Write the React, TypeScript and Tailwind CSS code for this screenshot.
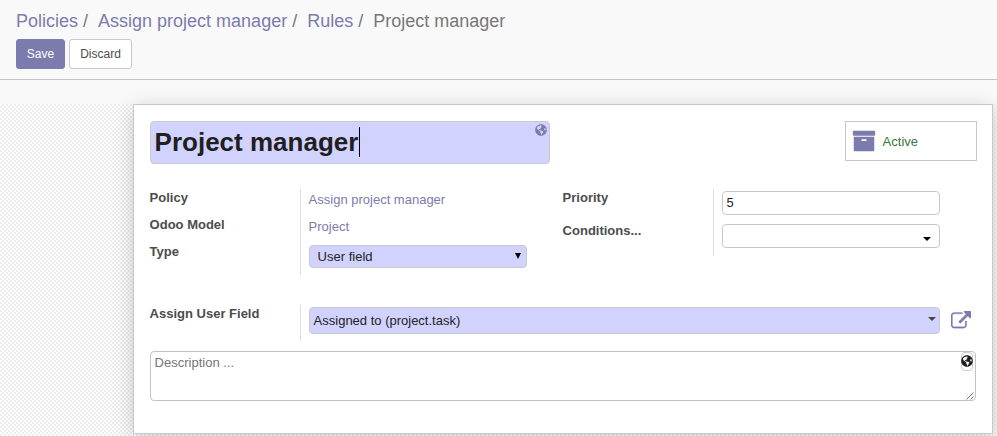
import { FaGlobeAmericas } from "react-icons/fa";

const crumbs = ["Policies", "Assign project manager", "Rules"];

function ArchiveIcon() {
  return (
    <svg viewBox="0 0 1792 1792" className="h-6 w-6 fill-[#7c7bad]">
      <path d="M1088 832q0-26-19-45t-45-19h-256q-26 0-45 19t-19 45 19 45 45 19h256q26 0 45-19t19-45zm576-192v960q0 26-19 45t-45 19h-1408q-26 0-45-19t-19-45v-960q0-26 19-45t45-19h1408q26 0 45 19t19 45zm64-448v256q0 26-19 45t-45 19h-1536q-26 0-45-19t-19-45v-256q0-26 19-45t45-19h1536q26 0 45 19t19 45z" />
    </svg>
  );
}

function ExternalLinkIcon() {
  return (
    <svg viewBox="0 0 1792 1792" className="h-5 w-5 fill-[#7c7bad] stroke-[#7c7bad]" strokeWidth="28">
      <path d="M1408 928v320q0 119-84.5 203.5t-203.5 84.5h-832q-119 0-203.5-84.5t-84.5-203.5v-832q0-119 84.5-203.5t203.5-84.5h704q14 0 23 9t9 23v64q0 14-9 23t-23 9h-704q-66 0-113 47t-47 113v832q0 66 47 113t113 47h832q66 0 113-47t47-113v-320q0-14 9-23t23-9h64q14 0 23 9t9 23zm384-864v512q0 26-19 45t-45 19-45-19l-176-176-652 652q-10 10-23 10t-23-10l-114-114q-10-10-10-23t10-23l652-652-176-176q-19-19-19-45t19-45 45-19h512q26 0 45 19t19 45z" />
    </svg>
  );
}

function Caret({ className }: { className: string }) {
  return (
    <svg viewBox="0 0 8 4" className={`h-1 w-2 ${className}`}>
      <path d="M0 0h8L4 4z" />
    </svg>
  );
}

export default function App() {
  return (
    <div className="flex h-[436px] w-[997px] flex-col overflow-hidden bg-[#f9f9f9] font-['Liberation_Sans',Arial,sans-serif] text-[13px] leading-5 text-[#4c4c4c]">
      <header className="h-20 shrink-0 border-b border-[#c3c3c8] pl-4 pt-[9px]">
        <nav className="flex h-6 items-center text-[18px] leading-6 text-[#777777]">
          {crumbs.map((c) => (
            <span key={c} className="whitespace-pre text-[#7c7bad]">
              {c}
              <span className="pl-[5px] pr-[10px] text-[#777777]">/</span>
            </span>
          ))}
          <span>Project manager</span>
        </nav>
        <div className="mt-1.5 flex gap-1 text-[12px]">
          <button className="h-[30px] w-[49px] rounded-[3px] border border-[#7c7bad] bg-[#7c7bad] text-white">Save</button>
          <button className="h-[30px] w-[63px] rounded-[3px] border border-[#c9c9c9] bg-white text-[#4c4c4c]">Discard</button>
        </div>
      </header>

      <main className="mt-6 h-[332px] shrink-0 bg-[repeating-conic-gradient(#ededed_0%_25%,#ffffff_0%_50%)] bg-[length:4px_4px] pl-[133px]">
        <section className="h-[330px] w-[860px] border border-[#c8c8d3] bg-white pl-4 pt-4 shadow-[0_5px_20px_rgba(0,0,0,0.2)]">
          <div className="flex justify-between pr-[15px]">
            <div className="flex h-[43px] w-[400px] justify-between rounded border border-[#c9c9cf] bg-[#d2d2ff] pl-[3.6px] pr-[2px]">
              <div className="flex h-[39px] items-center text-[26px] font-bold text-[#1f1f1f]">
                Project manager
                <span className="ml-[0.8px] h-[30px] w-px bg-black" />
              </div>
              <FaGlobeAmericas className="mt-[2px] h-3 w-3 text-[#7c7bad]" />
            </div>
            <div className="flex h-10 w-[132px] items-center gap-[6.6px] border border-[#c8c8c8] pl-[6px] text-[#3c763d]">
              <ArchiveIcon />
              <span className="pt-px">Active</span>
            </div>
          </div>

          <div className="mt-[25px] flex h-[86px]">
            <div className="-mt-px -ml-[0.4px] w-[150.4px] font-bold">
              <div className="h-[27px]">Policy</div>
              <div className="h-[27px]">Odoo Model</div>
              <div>Type</div>
            </div>
            <div className="w-[263px] border-l border-[#dddddd] pl-2 text-[#7c7bad]">
              <div className="-ml-[0.4px] h-[27px] pt-[1px]">Assign project manager</div>
              <div className="-ml-[0.4px] h-[29px] pt-[1px]">Project</div>
              <div className="flex h-[23px] w-[218px] items-center justify-between rounded border border-[#c9c9cf] bg-[#d2d2ff] pl-[7.6px] pr-[5px] text-[#222222]">
                User field
                <svg viewBox="0 0 6 6" className="mb-[2px] h-1.5 w-1.5 fill-black">
                  <path d="M0 0h6L3 6z" />
                </svg>
              </div>
            </div>
            <div className="-mt-px -ml-[0.4px] w-[150.4px] font-bold">
              <div className="h-[33px]">Priority</div>
              <div>Conditions...</div>
            </div>
            <div className="h-[67px] border-l border-[#dddddd] pl-2 pt-[2px]">
              <div className="flex h-6 w-[218px] items-center rounded border border-[#c9c9c9] pl-[3.6px] text-[#222222]">5</div>
              <div className="mt-[9px] flex h-6 w-[218px] items-center justify-end rounded border border-[#c9c9c9] pr-2">
                <Caret className="mt-[5px] fill-black" />
              </div>
            </div>
          </div>

          <div className="mt-[30px] flex h-9">
            <div className="-mt-px -ml-[0.4px] w-[150.4px] font-bold">Assign User Field</div>
            <div className="flex border-l border-[#dddddd] pl-2">
              <div className="mt-[2px] flex h-[27px] w-[631px] items-center justify-between rounded border border-[#c9c9cf] bg-[#d2d2ff] pl-[3.6px] pr-[3px] text-[#222222]">
                Assigned to (project.task)
                <Caret className="mb-1 fill-[#444444]" />
              </div>
              <div className="ml-[11px] mt-[6px]">
                <ExternalLinkIcon />
              </div>
            </div>
          </div>

          <div className="relative mt-[10px] h-[50px] w-[826px] rounded border border-[#c3c3c3] pl-[3.6px] pt-px text-[#757575]">
            Description ...
            <span className="absolute right-[2px] top-0 flex h-[19px] w-[12px] justify-center rounded border border-[#cccccc] pt-[2px] text-[#1f1f1f]">
              <FaGlobeAmericas className="h-3 w-3 shrink-0" />
            </span>
            <svg viewBox="0 0 8 8" className="absolute bottom-0 right-px h-2 w-2 stroke-[#555555]">
              <path d="M0.5 7.5l7-7M4.5 7.5l3-3" fill="none" strokeWidth="0.8" />
            </svg>
          </div>
        </section>
      </main>
    </div>
  );
}
